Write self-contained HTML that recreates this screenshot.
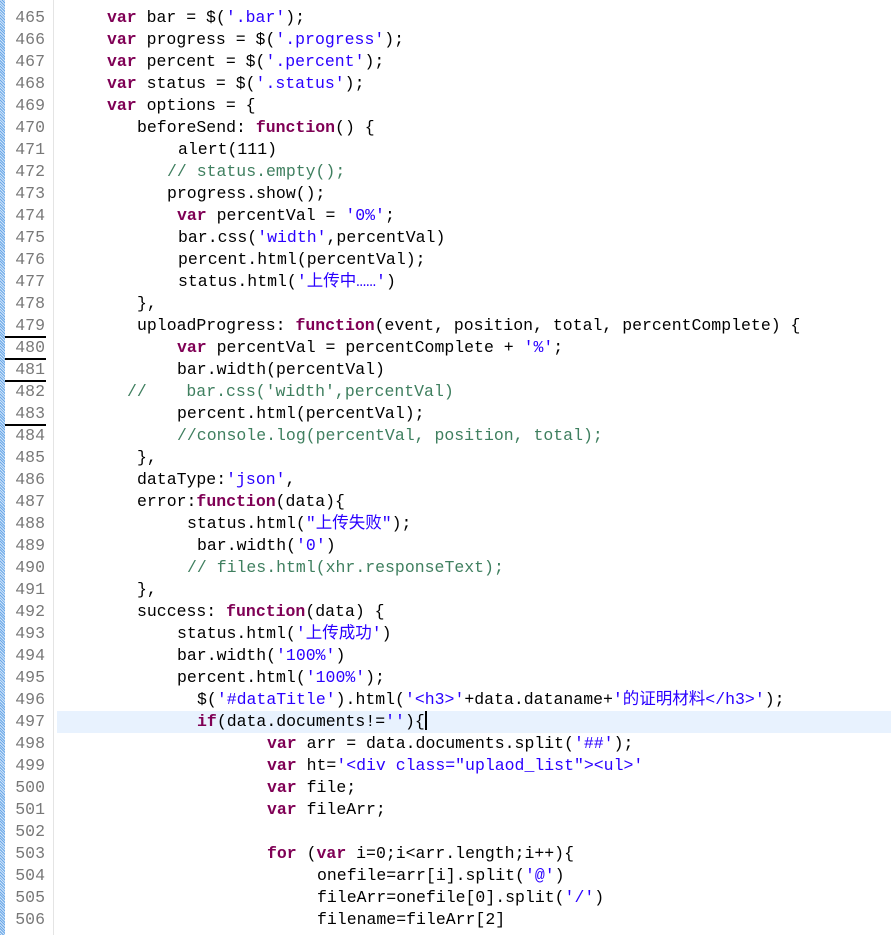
<!DOCTYPE html>
<html><head><meta charset="utf-8"><style>
body{margin:0;width:891px;height:935px;overflow:hidden;background:#fff;position:relative;font-family:"Liberation Mono","Noto Sans CJK SC",monospace;font-size:16.5px}
.strip{position:absolute;left:0;top:0;width:5px;height:935px;background:repeating-linear-gradient(45deg,#6aa8e8 0 1px,#cfe3f8 1px 2px)}
.sep{position:absolute;left:53px;top:0;width:1px;height:935px;background:#e4e4e4}
.hl{position:absolute;left:57px;top:711px;width:834px;height:22px;background:#e8f2fe}
.n{position:absolute;left:0;width:45px;text-align:right;color:#787878;height:22px;line-height:22px}
.c{position:absolute;white-space:pre;height:22px;line-height:22px;color:#000}
.k{color:#7f0055;font-weight:bold}.s{color:#2a00ff}.m{color:#3f7f5f}
.u{position:absolute;left:5px;width:41px;height:2px;background:#000}
.cur{display:inline-block;width:2px;height:19px;background:#000;vertical-align:-4px}
</style></head><body>
<div class="strip"></div><div class="sep"></div><div class="hl"></div>
<div class="u" style="top:336px"></div><div class="u" style="top:358px"></div><div class="u" style="top:380px"></div><div class="u" style="top:424px"></div>
<div class="n" style="top:-15px">464</div>
<div class="n" style="top:7px">465</div><div class="c" style="top:7px;left:107px"><span class="k">var</span> bar = $(<span class="s">'.bar'</span>);</div>
<div class="n" style="top:29px">466</div><div class="c" style="top:29px;left:107px"><span class="k">var</span> progress = $(<span class="s">'.progress'</span>);</div>
<div class="n" style="top:51px">467</div><div class="c" style="top:51px;left:107px"><span class="k">var</span> percent = $(<span class="s">'.percent'</span>);</div>
<div class="n" style="top:73px">468</div><div class="c" style="top:73px;left:107px"><span class="k">var</span> status = $(<span class="s">'.status'</span>);</div>
<div class="n" style="top:95px">469</div><div class="c" style="top:95px;left:107px"><span class="k">var</span> options = {</div>
<div class="n" style="top:117px">470</div><div class="c" style="top:117px;left:137px">beforeSend: <span class="k">function</span>() {</div>
<div class="n" style="top:139px">471</div><div class="c" style="top:139px;left:178px">alert(111)</div>
<div class="n" style="top:161px">472</div><div class="c m" style="top:161px;left:167px">// status.empty();</div>
<div class="n" style="top:183px">473</div><div class="c" style="top:183px;left:167px">progress.show();</div>
<div class="n" style="top:205px">474</div><div class="c" style="top:205px;left:177px"><span class="k">var</span> percentVal = <span class="s">'0%'</span>;</div>
<div class="n" style="top:227px">475</div><div class="c" style="top:227px;left:178px">bar.css(<span class="s">'width'</span>,percentVal)</div>
<div class="n" style="top:249px">476</div><div class="c" style="top:249px;left:178px">percent.html(percentVal);</div>
<div class="n" style="top:271px">477</div><div class="c" style="top:271px;left:178px">status.html(<span class="s">'上传中……'</span>)</div>
<div class="n" style="top:293px">478</div><div class="c" style="top:293px;left:137px">},</div>
<div class="n" style="top:315px">479</div><div class="c" style="top:315px;left:137px">uploadProgress: <span class="k">function</span>(event, position, total, percentComplete) {</div>
<div class="n" style="top:337px">480</div><div class="c" style="top:337px;left:177px"><span class="k">var</span> percentVal = percentComplete + <span class="s">'%'</span>;</div>
<div class="n" style="top:359px">481</div><div class="c" style="top:359px;left:177px">bar.width(percentVal)</div>
<div class="n" style="top:381px">482</div><div class="c m" style="top:381px;left:127px">//    bar.css('width',percentVal)</div>
<div class="n" style="top:403px">483</div><div class="c" style="top:403px;left:177px">percent.html(percentVal);</div>
<div class="n" style="top:425px">484</div><div class="c m" style="top:425px;left:177px">//console.log(percentVal, position, total);</div>
<div class="n" style="top:447px">485</div><div class="c" style="top:447px;left:137px">},</div>
<div class="n" style="top:469px">486</div><div class="c" style="top:469px;left:137px">dataType:<span class="s">'json'</span>,</div>
<div class="n" style="top:491px">487</div><div class="c" style="top:491px;left:137px">error:<span class="k">function</span>(data){</div>
<div class="n" style="top:513px">488</div><div class="c" style="top:513px;left:187px">status.html(<span class="s">"上传失败"</span>);</div>
<div class="n" style="top:535px">489</div><div class="c" style="top:535px;left:197px">bar.width(<span class="s">'0'</span>)</div>
<div class="n" style="top:557px">490</div><div class="c m" style="top:557px;left:187px">// files.html(xhr.responseText);</div>
<div class="n" style="top:579px">491</div><div class="c" style="top:579px;left:137px">},</div>
<div class="n" style="top:601px">492</div><div class="c" style="top:601px;left:137px">success: <span class="k">function</span>(data) {</div>
<div class="n" style="top:623px">493</div><div class="c" style="top:623px;left:177px">status.html(<span class="s">'上传成功'</span>)</div>
<div class="n" style="top:645px">494</div><div class="c" style="top:645px;left:177px">bar.width(<span class="s">'100%'</span>)</div>
<div class="n" style="top:667px">495</div><div class="c" style="top:667px;left:177px">percent.html(<span class="s">'100%'</span>);</div>
<div class="n" style="top:689px">496</div><div class="c" style="top:689px;left:197px">$(<span class="s">'#dataTitle'</span>).html(<span class="s">'&lt;h3&gt;'</span>+data.dataname+<span class="s">'的证明材料&lt;/h3&gt;'</span>);</div>
<div class="n" style="top:711px">497</div><div class="c" style="top:711px;left:197px"><span class="k">if</span>(data.documents!=<span class="s">''</span>){<span class="cur"></span></div>
<div class="n" style="top:733px">498</div><div class="c" style="top:733px;left:267px"><span class="k">var</span> arr = data.documents.split(<span class="s">'##'</span>);</div>
<div class="n" style="top:755px">499</div><div class="c" style="top:755px;left:267px"><span class="k">var</span> ht=<span class="s">'&lt;div class="uplaod_list"&gt;&lt;ul&gt;'</span></div>
<div class="n" style="top:777px">500</div><div class="c" style="top:777px;left:267px"><span class="k">var</span> file;</div>
<div class="n" style="top:799px">501</div><div class="c" style="top:799px;left:267px"><span class="k">var</span> fileArr;</div>
<div class="n" style="top:821px">502</div>
<div class="n" style="top:843px">503</div><div class="c" style="top:843px;left:267px"><span class="k">for</span> (<span class="k">var</span> i=0;i&lt;arr.length;i++){</div>
<div class="n" style="top:865px">504</div><div class="c" style="top:865px;left:317px">onefile=arr[i].split(<span class="s">'@'</span>)</div>
<div class="n" style="top:887px">505</div><div class="c" style="top:887px;left:317px">fileArr=onefile[0].split(<span class="s">'/'</span>)</div>
<div class="n" style="top:909px">506</div><div class="c" style="top:909px;left:317px">filename=fileArr[2]</div>
</body></html>
